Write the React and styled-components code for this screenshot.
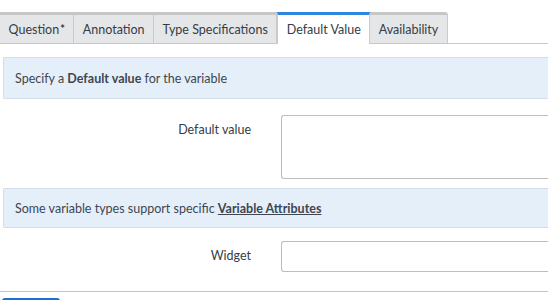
import React from "react";
import styled, { createGlobalStyle } from "styled-components";

const GlobalStyle = createGlobalStyle`
  html, body { margin: 0; padding: 0; background: #ffffff; overflow: hidden; }
  body { font-family: "Lato", "Liberation Sans", sans-serif; color: #343d47; }
`;

const Page = styled.div`
  width: 600px;
  padding-top: 12px;
`;

const TabBar = styled.div`
  display: flex;
  border-bottom: 1px solid #c7c7c7;
`;

const Tab = styled.div`
  box-sizing: border-box;
  padding: 0 8.5px;
  display: flex;
  align-items: center;
  font-size: 12.5px;
  color: #343d47;
  background: ${(p) => (p.$active ? "#ffffff" : "#e5e6e8")};
  border-top: 3px solid ${(p) => (p.$active ? "#2f86de" : "#c5c6c8")};
  border-right: 1px solid #c9cacc;
  border-left: ${(p) => (p.$active ? "1px solid #c9cacc" : "none")};
  margin-bottom: ${(p) => (p.$active ? "-1px" : "0")};
  height: ${(p) => (p.$active ? "32px" : "31px")};
  border-top-right-radius: ${(p) => (p.$last ? "3px" : "0")};
`;

const Star = styled.sup`
  font-size: 11px;
  font-weight: 700;
  margin-left: 1px;
  position: relative;
  top: -1px;
`;

const Content = styled.div`
  padding: 13px 0 0 3px;
`;

const InfoBox = styled.div`
  box-sizing: border-box;
  height: ${(p) => p.$h || 42}px;
  display: flex;
  align-items: center;
  padding-left: 11px;
  background: #e5effa;
  border: 1px solid #d3dde9;
  border-right: none;
  border-radius: 2px 0 0 2px;
  font-size: 12.5px;
  color: #3d4651;
`;

const Strong = styled.b`
  font-weight: 700;
`;

const Link = styled.span`
  font-weight: 700;
  text-decoration: underline;
`;

const FieldRow = styled.div`
  display: grid;
  grid-template-columns: 248px 1fr;
  column-gap: 30px;
  align-items: start;
  margin-top: ${(p) => p.$mt}px;
  margin-bottom: ${(p) => p.$mb}px;
`;

const Label = styled.label`
  text-align: right;
  font-size: 12.5px;
  line-height: 18px;
  padding-top: 6px;
  color: #343d47;
`;

const TextArea = styled.div`
  box-sizing: border-box;
  height: 64px;
  border: 1px solid #bdbdbd;
  border-right: none;
  border-radius: 3px 0 0 3px;
  background: #fff;
`;

const Input = styled.div`
  box-sizing: border-box;
  height: 31px;
  border: 1px solid #bdbdbd;
  border-right: none;
  border-radius: 3px 0 0 3px;
  background: #fff;
`;

const Divider = styled.div`
  height: 1px;
  background: #c4c4c4;
  margin-top: 19px;
`;

const Button = styled.div`
  width: 58px;
  height: 10px;
  margin: 6px 0 0 2px;
  background: #1f6fd0;
  border-radius: 3px 3px 0 0;
`;

export default function App() {
  return (
    <Page>
      <GlobalStyle />
      <TabBar>
        <Tab>
          Question<Star>*</Star>
        </Tab>
        <Tab>Annotation</Tab>
        <Tab>Type Specifications</Tab>
        <Tab $active>Default Value</Tab>
        <Tab $last>Availability</Tab>
      </TabBar>
      <Content>
        <InfoBox $h={42}>
          <span>
            Specify a <Strong>Default value</Strong> for the variable
          </span>
        </InfoBox>
        <FieldRow $mt={16} $mb={9}>
          <Label>Default value</Label>
          <TextArea />
        </FieldRow>
        <InfoBox $h={40}>
          <span>
            Some variable types support specific <Link>Variable Attributes</Link>
          </span>
        </InfoBox>
        <FieldRow $mt={13} $mb={0}>
          <Label>Widget</Label>
          <Input />
        </FieldRow>
      </Content>
      <Divider />
      <Button />
    </Page>
  );
}
